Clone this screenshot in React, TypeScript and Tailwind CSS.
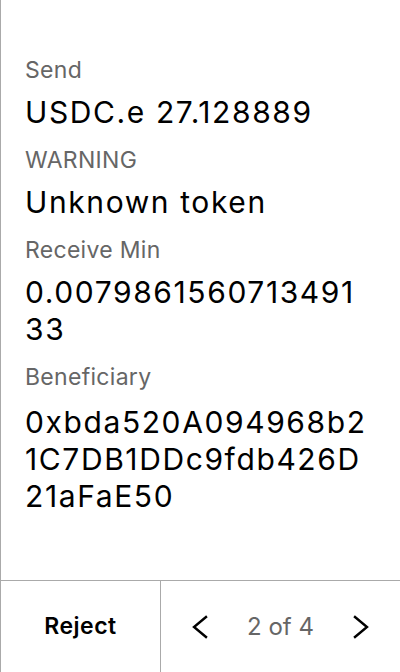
import React from "react";

function Field({ label, lines, gap = "mt-[10px]" }: { label: string; lines: string[]; gap?: string }) {
  return (
    <div className="flex flex-col mb-[15px]">
      <div className="text-[23px] leading-[28px] tracking-[0.3px] text-[#666666]">{label}</div>
      <div className={`${gap} text-[30px] leading-[37px] tracking-[1.6px] text-black`}>
        {lines.map((l, i) => (
          <div key={i}>{l}</div>
        ))}
      </div>
    </div>
  );
}

export default function App() {
  return (
    <div
      className="w-[400px] h-[672px] bg-white border-l border-[#aaaaaa] flex flex-col"
      style={{ fontFamily: "Inter, 'Noto Sans', sans-serif" }}
    >
      <div className="flex-1 pl-[24px] pr-[4px] pt-[56px] overflow-hidden">
        <Field label="Send" lines={["USDC.e 27.128889"]} />
        <Field label="WARNING" lines={["Unknown token"]} />
        <Field label="Receive Min" lines={["0.0079861560713491", "33"]} />
        <Field
          label="Beneficiary"
          gap="mt-[13px]"
          lines={["0xbda520A094968b2", "1C7DB1DDc9fdb426D", "21aFaE50"]}
        />
      </div>
      <div className="h-[92px] shrink-0 border-t border-[#aaaaaa] flex">
        <div className="w-[160px] border-r border-[#aaaaaa] flex items-center justify-center text-[23px] font-semibold tracking-[0.5px] text-black">
          Reject
        </div>
        <div className="flex-1 flex items-center justify-between px-[31px]">
          <svg width="16" height="24" viewBox="0 0 16 24" fill="none" stroke="black" strokeWidth="2.4" strokeLinecap="square" strokeLinejoin="miter">
            <path d="M14 2 L2 12 L14 22" />
          </svg>
          <span className="text-[24px] text-[#666666]">2 of 4</span>
          <svg width="16" height="24" viewBox="0 0 16 24" fill="none" stroke="black" strokeWidth="2.4" strokeLinecap="square" strokeLinejoin="miter">
            <path d="M2 2 L14 12 L2 22" />
          </svg>
        </div>
      </div>
    </div>
  );
}
